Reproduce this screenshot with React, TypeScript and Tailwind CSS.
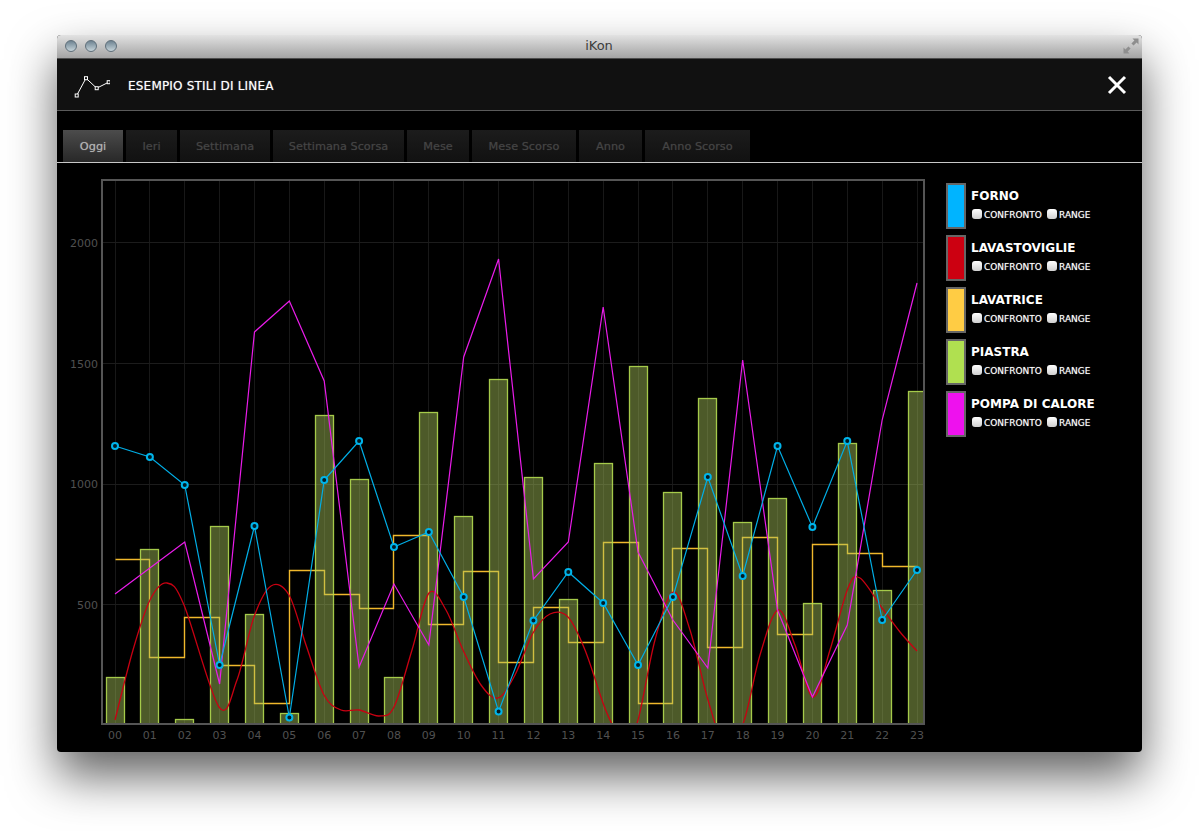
const tabs = [
  { label: "Oggi", w: "w-[60px]", active: true },
  { label: "Ieri", w: "w-[51px]" },
  { label: "Settimana", w: "w-[90px]" },
  { label: "Settimana Scorsa", w: "w-[131px]" },
  { label: "Mese", w: "w-[62px]" },
  { label: "Mese Scorso", w: "w-[104px]" },
  { label: "Anno", w: "w-[63px]" },
  { label: "Anno Scorso", w: "w-[105px]" },
];

const legend = [
  { label: "FORNO", color: "bg-[#00b4ff]" },
  { label: "LAVASTOVIGLIE", color: "bg-[#cc0011]" },
  { label: "LAVATRICE", color: "bg-[#ffcc44]" },
  { label: "PIASTRA", color: "bg-[#b0e050]" },
  { label: "POMPA DI CALORE", color: "bg-[#ee11ee]" },
];

const hourX = (h: number) => 115 + h * 34.87;
const crisp = (v: number) => Math.round(v - 0.5) + 0.5;

const barTops = [677, 549, 719, 526, 614, 713, 415, 479, 677, 412, 516, 379, 477, 599, 463, 366, 492, 398, 522, 498, 603, 443, 590, 391];
const forno = [446, 457, 485, 665, 526, 717.5, 480, 441, 547, 532, 597, 711.5, 620.5, 572, 603, 665, 597, 477, 576, 446, 527, 441, 620, 570];
const pompa = [594, 568, 542, 684, 332, 301, 381, 667, 584, 645, 357, 259, 579, 542, 307, 552, 620, 668, 360, 610, 697, 625, 420, 283];
const lavatrice = [559, 657, 617, 665, 703, 570, 594, 608, 535, 624, 571, 662, 607, 642, 542, 703, 548, 647, 537, 634, 544, 553, 566];
const lavastoviglie: [number, number][] = [
  [115, 720], [133, 650], [150, 600], [167, 583], [184, 605], [219, 707], [237, 680], [254, 617], [271, 586], [289, 595],
  [306, 645], [324, 695], [341, 710], [359, 710], [379, 716], [394, 707], [412, 650], [429, 593], [446, 610], [463, 650],
  [481, 685], [498, 698], [515, 675], [533, 633], [550, 614], [568, 617], [585, 650], [603, 703], [612, 724], [625, 745],
  [638, 720], [655, 640], [673, 592], [690, 630], [708, 700], [725, 745], [743, 724], [760, 655], [778, 610], [795, 645],
  [813, 697], [830, 650], [848, 588], [860, 578], [882, 608], [900, 632], [917, 651],
];

const polyline = (ys: number[]) => ys.map((y, i) => `${hourX(i)},${y}`).join(" ");

const stepPoints = () => {
  const pts: string[] = [];
  lavatrice.forEach((y, i) => {
    pts.push(`${crisp(hourX(i))},${crisp(y)}`, `${crisp(hourX(i + 1))},${crisp(y)}`);
  });
  return pts.join(" ");
};

const smoothPath = (pts: [number, number][]) => {
  let d = `M${pts[0][0]},${pts[0][1]}`;
  for (let i = 0; i < pts.length - 1; i++) {
    const p0 = pts[Math.max(i - 1, 0)];
    const p1 = pts[i];
    const p2 = pts[i + 1];
    const p3 = pts[Math.min(i + 2, pts.length - 1)];
    const c1x = p1[0] + (p2[0] - p0[0]) / 6;
    const c1y = p1[1] + (p2[1] - p0[1]) / 6;
    const c2x = p2[0] - (p3[0] - p1[0]) / 6;
    const c2y = p2[1] - (p3[1] - p1[1]) / 6;
    d += ` C${c1x},${c1y} ${c2x},${c2y} ${p2[0]},${p2[1]}`;
  }
  return d;
};

const Chart = () => (
  <svg viewBox="57 163 878 589" className="block h-[589px] w-[878px] shrink-0">
    <defs>
      <clipPath id="plot">
        <rect x="102" y="180" width="822" height="544" />
      </clipPath>
    </defs>
    {barTops.map((_, i) => (
      <line key={i} x1={crisp(hourX(i))} x2={crisp(hourX(i))} y1="181" y2="724" stroke="#181818" />
    ))}
    {[242.5, 363.5, 484.5, 604.5].map((y) => (
      <line key={y} x1="102" x2="924" y1={y} y2={y} stroke="#1c1c1c" />
    ))}
    <g clipPath="url(#plot)">
      <polyline points={stepPoints()} fill="none" stroke="#f0b82c" strokeWidth="1.4" />
      {barTops.map((top, i) => (
        <rect
          key={i}
          x={crisp(hourX(i) - 9)}
          y={top + 0.5}
          width="18"
          height={724 - top}
          fill="#abc85b"
          fillOpacity="0.45"
          stroke="#b4dc50"
          strokeOpacity="0.9"
          strokeWidth="1.3"
        />
      ))}
      <path d={smoothPath(lavastoviglie)} fill="none" stroke="#c80012" strokeWidth="1.3" />
      <polyline points={polyline(pompa)} fill="none" stroke="#ea1cea" strokeWidth="1.2" />
      <polyline points={polyline(forno)} fill="none" stroke="#00aee6" strokeWidth="1.2" />
    </g>
    {forno.map((y, i) => (
      <circle key={i} cx={hourX(i)} cy={y} r="3" fill="#021a22" stroke="#00b4ea" strokeWidth="2" />
    ))}
    <rect x="102" y="180" width="822" height="544" fill="none" stroke="#555555" strokeWidth="2" />
    <g fontFamily="'DejaVu Sans', sans-serif" fontSize="11" fill="#505050">
      {[
        [2000, 246.5],
        [1500, 367.5],
        [1000, 488],
        [500, 608.5],
      ].map(([v, y]) => (
        <text key={v} x="98" y={y} textAnchor="end">
          {v}
        </text>
      ))}
      {barTops.map((_, i) => (
        <text key={i} x={hourX(i)} y="739" textAnchor="middle">
          {String(i).padStart(2, "0")}
        </text>
      ))}
    </g>
  </svg>
);

const LineLogo = () => (
  <svg viewBox="0 0 38 26" className="h-[26px] w-[38px]">
    <polyline points="4.7,23.5 14,6.2 24.7,16.2 36.7,10.2" fill="none" stroke="#ffffff" strokeWidth="1" />
    {[
      [4.7, 23.5],
      [14, 6.2],
      [24.7, 16.2],
      [36.7, 10.2],
    ].map(([x, y]) => (
      <rect key={x} x={x - 1.5} y={y - 1.5} width="3" height="3" fill="#111111" stroke="#ffffff" strokeWidth="1" />
    ))}
  </svg>
);

const Light = () => (
  <span className="h-3 w-3 rounded-full border border-[#5f6f7a] bg-gradient-to-b from-[#6f8492] to-[#c6d4da]" />
);

export default function App() {
  return (
    <div className="h-[831px] w-[1199px] overflow-hidden bg-white pl-[57px] pt-[35px] font-['DejaVu_Sans',sans-serif]">
      <div className="flex h-[717px] w-[1085px] flex-col overflow-hidden rounded-[4px] bg-black shadow-[0_24px_48px_rgba(0,0,0,0.62)]">
        <div className="relative flex h-[24px] shrink-0 items-center border-b border-[#4c4c4c] bg-gradient-to-b from-[#e2e2e2] to-[#a4a4a4] pb-[1px] pl-[8px]">
          <div className="flex gap-2">
            <Light />
            <Light />
            <Light />
          </div>
          <span className="flex-1 pr-[61px] text-center text-[13px] text-[#3c3c3c]">iKon</span>
          <svg viewBox="0 0 16 16" className="absolute right-[3px] top-[3px] h-[16px] w-[16px]">
            <path d="M9.5 0.5H15.5V6.5L13.6 4.6 10.6 7.6 8.4 5.4 11.4 2.4ZM6.5 15.5H0.5V9.5L2.4 11.4 5.4 8.4 7.6 10.6 4.6 13.6Z" fill="#8e8e8e" />
          </svg>
        </div>
        <div className="flex h-[52px] shrink-0 items-center border-b border-[#5a5a5a] bg-[#111111] pl-[15px] pr-[15px]">
          <LineLogo />
          <span className="ml-[18px] flex-1 pt-[2px] text-[12px] font-medium tracking-[0.2px] text-white [text-shadow:0_0_1px_rgba(255,255,255,0.6)]">ESEMPIO STILI DI LINEA</span>
          <svg viewBox="0 0 20 20" className="h-5 w-5">
            <path d="M2 2 18 18M18 2 2 18" stroke="#ffffff" strokeWidth="3" />
          </svg>
        </div>
        <div className="flex h-[52px] shrink-0 items-end gap-[3px] border-b border-[#c8c8c8] pl-[6px]">
          {tabs.map((t) => (
            <div
              key={t.label}
              className={`${t.w} flex h-[32px] items-center justify-center pt-[2px] text-[11.3px] ${
                t.active
                  ? "bg-gradient-to-b from-[#4c4c4c] to-[#282828] font-medium text-[#b4b4b4] [text-shadow:0_0_1px_rgba(180,180,180,0.6)]"
                  : "bg-gradient-to-b from-[#1c1c1c] to-[#111111] text-[#444444] [text-shadow:0_0_1px_rgba(68,68,68,0.6)]"
              }`}
            >
              {t.label}
            </div>
          ))}
        </div>
        <div className="flex flex-1">
          <Chart />
          <div className="ml-[11px] mt-[20px] flex flex-col gap-[6px]">
            {legend.map((l) => (
              <div key={l.label} className="flex h-[46px] items-start">
                <div className={`${l.color} h-[46px] w-[20px] border-2 border-[#666666]`} />
                <div className="ml-[5px] pt-[6px]">
                  <div className="text-[12px] font-bold leading-[15px] text-white">{l.label}</div>
                  <div className="mt-[3px] flex items-center text-[9px] leading-[12px] text-white [text-shadow:0_0_1px_rgba(255,255,255,0.6)]">
                    <input type="checkbox" className="ml-[1px] h-[10px] w-[10px] appearance-none rounded-[3px] bg-gradient-to-b from-white to-[#d0d0d0]" />
                    <span className="ml-[2px] mt-[2px] w-[63px]">CONFRONTO</span>
                    <input type="checkbox" className="h-[10px] w-[10px] appearance-none rounded-[3px] bg-gradient-to-b from-white to-[#d0d0d0]" />
                    <span className="ml-[2px] mt-[2px]">RANGE</span>
                  </div>
                </div>
              </div>
            ))}
          </div>
        </div>
      </div>
    </div>
  );
}
